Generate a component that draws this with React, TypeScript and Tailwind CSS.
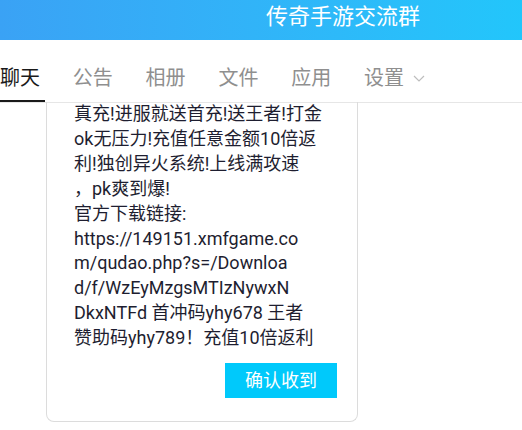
import React from 'react';

const TABS = ['聊天', '公告', '相册', '文件', '应用', '设置'];

const LINES = [
  '真充!进服就送首充!送王者!打金',
  'ok无压力!充值任意金额10倍返',
  '利!独创异火系统!上线满攻速',
  '，pk爽到爆!',
  '官方下载链接:',
  'https://149151.xmfgame.co',
  'm/qudao.php?s=/Downloa',
  'd/f/WzEyMzgsMTIzNywxN',
  'DkxNTFd 首冲码yhy678 王者',
  '赞助码yhy789！充值10倍返利',
];

const font = { fontFamily: 'Roboto, "Noto Sans CJK SC", sans-serif' };

export default function App() {
  return (
    <div className="w-[522px] h-[430px] overflow-hidden bg-white" style={font}>
      <div className="h-10 bg-gradient-to-r from-[#3aa2f5] to-[#22c6fb] flex items-center pl-[266px] pb-[6px]">
        <span className="text-white text-[22px] leading-none">传奇手游交流群</span>
      </div>

      <div className="h-[63px] flex border-b border-[#e6e6e6]">
        {TABS.map((t, i) => (
          <div key={t} className="w-[72.8px] shrink-0 flex flex-col">
            <div className="flex-1 flex items-center pt-[16px]">
              <span className={`text-[20px] leading-none ${i === 0 ? 'text-[#1a1a1a]' : 'text-[#8f8f8f]'}`}>{t}</span>
              {t === '设置' && (
                <svg width="12" height="7" viewBox="0 0 12 7" className="ml-[9px] mt-[1px]">
                  <path d="M1 1l5 5 5-5" fill="none" stroke="#bdbdbd" strokeWidth="1.2" />
                </svg>
              )}
            </div>
            <div className={`h-[2px] w-[45px] ${i === 0 ? 'bg-[#1a1a1a]' : ''}`} />
          </div>
        ))}
      </div>

      <div className="ml-[46px] w-[312px] border-x border-b border-[#dcdcdc] rounded-b-lg pl-[27px] pr-5 pb-[23px]">
        <div className="text-[18px] leading-[24.9px] text-[#1e1e30] -mt-px">
          {LINES.map(l => (
            <div key={l} className="whitespace-nowrap">{l}</div>
          ))}
        </div>
        <div className="flex justify-end mt-[12px]">
          <button className="w-[112px] h-[35px] bg-[#00c9fb] text-white text-[18px] leading-none">确认收到</button>
        </div>
      </div>
    </div>
  );
}
